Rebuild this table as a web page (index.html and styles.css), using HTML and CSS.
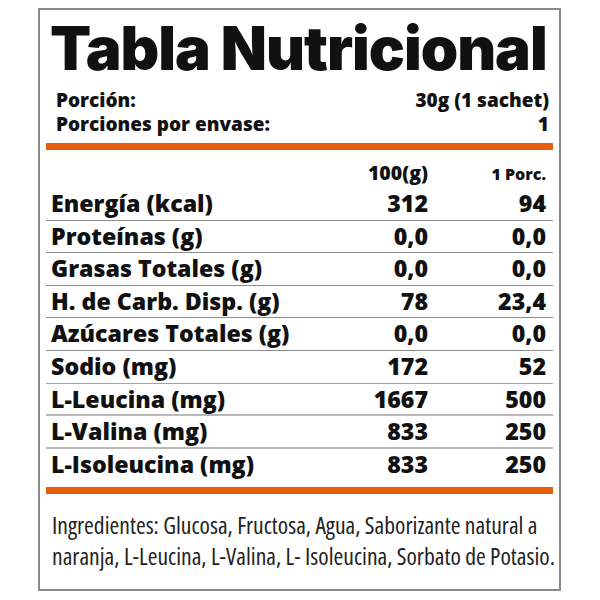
FILE: index.html
```html
<!DOCTYPE html>
<html lang="es">
<head>
<meta charset="utf-8">
<title>Tabla Nutricional</title>
<link rel="stylesheet" href="styles.css">
</head>
<body>
<div class="label">
  <h1 class="title">Tabla Nutricional</h1>
  <div class="info"><span>Porción:</span><span>30g (1 sachet)</span></div>
  <div class="info"><span>Porciones por envase:</span><span>1</span></div>
  <div class="bar"></div>
  <div class="table">
    <div class="row head"><span></span><span class="h100">100(g)</span><span class="hpor">1 Porc.</span></div>
    <div class="row"><span>Energía (kcal)</span><span>312</span><span>94</span></div>
    <div class="row"><span>Proteínas (g)</span><span>0,0</span><span>0,0</span></div>
    <div class="row"><span>Grasas Totales (g)</span><span>0,0</span><span>0,0</span></div>
    <div class="row"><span>H. de Carb. Disp. (g)</span><span>78</span><span>23,4</span></div>
    <div class="row"><span>Azúcares Totales (g)</span><span>0,0</span><span>0,0</span></div>
    <div class="row sep-orange"><span>Sodio (mg)</span><span>172</span><span>52</span></div>
    <div class="row sep-light"><span>L-Leucina (mg)</span><span>1667</span><span>500</span></div>
    <div class="row sep-light"><span>L-Valina (mg)</span><span>833</span><span>250</span></div>
    <div class="row last"><span>L-Isoleucina (mg)</span><span>833</span><span>250</span></div>
  </div>
  <div class="bar"></div>
  <p class="ingredients">Ingredientes: Glucosa, Fructosa, Agua, Saborizante natural a<br>naranja, L-Leucina, L-Valina, L- Isoleucina, Sorbato de Potasio.</p>
</div>
</body>
</html>
```

FILE: styles.css
```css
html, body {
  margin: 0;
  padding: 0;
  background: #ffffff;
}

.label {
  box-sizing: border-box;
  width: 523px;
  height: 583px;
  margin: 8px 0 0 38px;
  border: 2px solid #8a8a8a;
  padding: 0 6px;
  color: #111111;
  font-family: "Open Sans", "Noto Sans", sans-serif;
}

.title {
  margin: 8px 0 0 4px;
  font-family: Inter, "Liberation Sans", sans-serif;
  font-weight: 900;
  font-size: 60px;
  line-height: 60px;
  letter-spacing: -1px;
  color: #111111;
  white-space: nowrap;
}

.info {
  display: flex;
  justify-content: space-between;
  padding: 0 4px 0 10px;
  font-weight: 800;
  font-stretch: 90%;
  font-size: 19px;
  line-height: 24px;
}

.title + .info {
  margin-top: 9.5px;
}

.bar {
  height: 7px;
  background: #e85d0e;
  margin-top: 7.5px;
}

.table {
  display: flex;
  flex-direction: column;
}

.row {
  box-sizing: border-box;
  display: grid;
  grid-template-columns: 1fr 100px 118px;
  padding: 0 7px 0 5px;
  height: 32.6px;
  border-bottom: 1px solid #8c8c8c;
  font-weight: 800;
  font-stretch: 90%;
  font-size: 23.2px;
  line-height: 31.6px;
  white-space: nowrap;
}

.row span:nth-child(2),
.row span:nth-child(3) {
  text-align: right;
}

.row.head {
  height: 38px;
  border-bottom: none;
  align-items: end;
  line-height: 1;
  padding-bottom: 6px;
}

.h100 {
  font-size: 19.5px;
}

.hpor {
  font-size: 16px;
}

.row.sep-orange {
  border-bottom: 1px solid #ee8a55;
}

.row.sep-light {
  border-bottom: 2px solid #b8b8b8;
}

.row.last {
  border-bottom: none;
}

.table + .bar {
  margin-top: 6px;
}

.ingredients {
  margin: 16px -6px 0 0;
  padding-left: 6px;
  font-family: "Open Sans", sans-serif;
  font-stretch: 75%;
  font-size: 23.6px;
  line-height: 31px;
  color: #222222;
  white-space: nowrap;
}
```
